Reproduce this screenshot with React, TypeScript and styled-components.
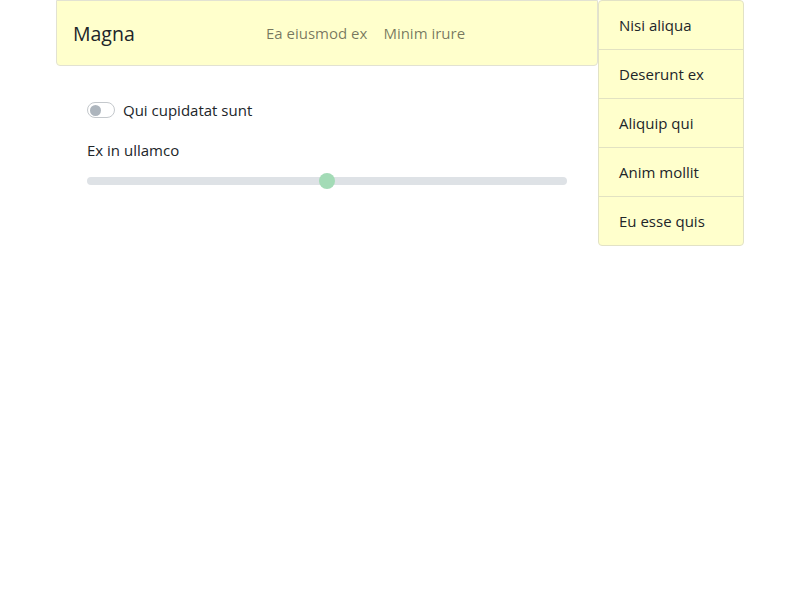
import React from "react";
import styled, { createGlobalStyle } from "styled-components";

const Global = createGlobalStyle`
  html, body { margin: 0; padding: 0; background: #fff; }
  body { font-family: "Open Sans", "Noto Sans", sans-serif; color: #212529; }
`;

const Page = styled.div`
  display: flex;
  justify-content: center;
  align-items: flex-start;
`;

const Main = styled.div`
  width: 542px;
  display: flex;
  flex-direction: column;
`;

const Navbar = styled.nav`
  height: 66px;
  box-sizing: border-box;
  background: #ffffcc;
  border: 1px solid #e2e2d2;
  border-radius: 0 0 4px 4px;
  display: flex;
  align-items: center;
  padding: 0 16px;
`;

const Brand = styled.span`
  font-size: 19.5px;
  color: #212529;
  width: 193px;
`;

const NavLinks = styled.div`
  display: flex;
  gap: 16px;
`;

const NavLink = styled.span`
  font-size: 15px;
  color: rgba(0, 0, 0, 0.55);
`;

const Content = styled.div`
  padding: 32px 31px 0 31px;
  display: flex;
  flex-direction: column;
`;

const SwitchRow = styled.label`
  display: flex;
  align-items: center;
  gap: 8px;
  font-size: 15px;
  line-height: 24px;
`;

const Switch = styled.span`
  width: 28px;
  height: 16px;
  box-sizing: border-box;
  border: 1px solid #c4c8cc;
  border-radius: 8px;
  background: #fff;
  display: flex;
  align-items: center;
  padding-left: 2px;
  &::after {
    content: "";
    width: 11px;
    height: 11px;
    border-radius: 50%;
    background: #adb5bd;
  }
`;

const FieldLabel = styled.div`
  font-size: 15px;
  line-height: 24px;
  margin-top: 16px;
`;

const Track = styled.div`
  position: relative;
  margin-top: 15px;
  height: 8px;
  border-radius: 4px;
  background: #dee2e6;
`;

const Thumb = styled.span`
  position: absolute;
  top: 50%;
  width: 16px;
  height: 16px;
  margin-left: -8px;
  margin-top: -8px;
  border-radius: 50%;
  background: #a3dbb6;
`;

const List = styled.ul`
  list-style: none;
  margin: 0;
  padding: 0;
  width: 146px;
  box-sizing: border-box;
  border: 1px solid #e2e2c6;
  border-radius: 4px;
  background: #ffffcc;
`;

const Item = styled.li`
  padding: 12px 20px;
  font-size: 15px;
  line-height: 24px;
  color: #212529;
  & + & {
    border-top: 1px solid #e2e2c2;
  }
`;

export default function App() {
  const items = ["Nisi aliqua", "Deserunt ex", "Aliquip qui", "Anim mollit", "Eu esse quis"];
  return (
    <>
      <Global />
      <Page>
        <Main>
          <Navbar>
            <Brand>Magna</Brand>
            <NavLinks>
              <NavLink>Ea eiusmod ex</NavLink>
              <NavLink>Minim irure</NavLink>
            </NavLinks>
          </Navbar>
          <Content>
            <SwitchRow>
              <Switch />
              Qui cupidatat sunt
            </SwitchRow>
            <FieldLabel>Ex in ullamco</FieldLabel>
            <Track>
              <Thumb style={{ left: "50%" }} />
            </Track>
          </Content>
        </Main>
        <List>
          {items.map((t) => (
            <Item key={t}>{t}</Item>
          ))}
        </List>
      </Page>
    </>
  );
}
